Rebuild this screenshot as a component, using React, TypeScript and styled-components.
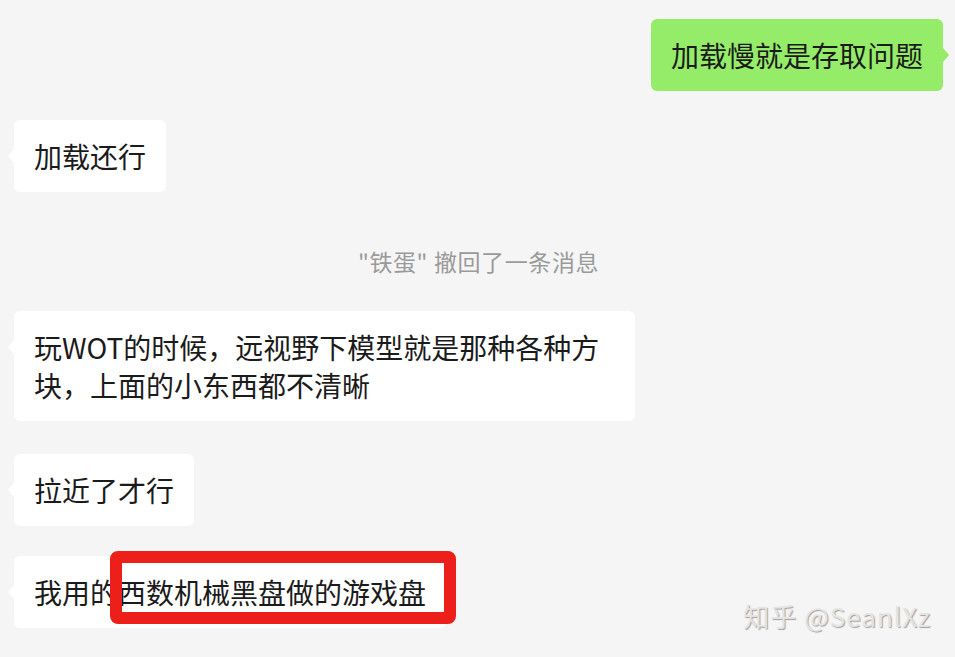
import React from 'react';
import styled, { createGlobalStyle } from 'styled-components';

const GlobalStyle = createGlobalStyle`
  html, body {
    margin: 0;
    padding: 0;
    background: #f5f5f5;
  }
  body {
    font-family: "Noto Sans CJK SC", "Noto Sans", sans-serif;
    color: #1b1b1b;
  }
`;

const Chat = styled.div`
  position: relative;
  width: 955px;
  height: 657px;
  overflow: hidden;
  padding: 19px 12px 0 14px;
  box-sizing: border-box;
  display: flex;
  flex-direction: column;
`;

const Row = styled.div<{ $mine?: boolean; $gap: number }>`
  position: relative;
  display: flex;
  justify-content: ${(p) => (p.$mine ? 'flex-end' : 'flex-start')};
  margin-top: ${(p) => p.$gap}px;
`;

const Bubble = styled.div<{ $mine?: boolean }>`
  position: relative;
  max-width: 581px;
  padding: 17px 20px;
  border-radius: 6px;
  font-size: 28px;
  line-height: 38px;
  background: ${(p) => (p.$mine ? '#95ec69' : '#ffffff')};

  &::before {
    content: '';
    position: absolute;
    top: 29px;
    ${(p) => (p.$mine ? 'right: -6px;' : 'left: -6px;')}
    border-top: 7px solid transparent;
    border-bottom: 7px solid transparent;
    ${(p) =>
      p.$mine
        ? 'border-left: 6px solid #95ec69;'
        : 'border-right: 6px solid #ffffff;'}
  }
`;

const Notice = styled.div`
  margin-top: 47px;
  text-align: center;
  font-size: 23px;
  line-height: 44px;
  letter-spacing: 0.6px;
  color: #9a9a9a;
`;

const Highlight = styled.div`
  position: absolute;
  left: 96px;
  top: -5px;
  width: 346px;
  height: 73px;
  box-sizing: border-box;
  border: 12px solid #ec1f1a;
  border-radius: 8px;
`;

const Watermark = styled.div`
  position: absolute;
  right: 24px;
  top: 598px;
  font-size: 26px;
  line-height: 36px;
  color: #e4e4e4;
  text-shadow: 1px 1px 1px #a0a0a0;
  letter-spacing: 1px;
`;

const App: React.FC = () => {
  return (
    <>
      <GlobalStyle />
      <Chat>
        <Row $mine $gap={0}>
          <Bubble $mine>加载慢就是存取问题</Bubble>
        </Row>
        <Row $gap={29}>
          <Bubble>加载还行</Bubble>
        </Row>
        <Notice>"铁蛋" 撤回了一条消息</Notice>
        <Row $gap={28}>
          <Bubble>玩WOT的时候，远视野下模型就是那种各种方块，上面的小东西都不清晰</Bubble>
        </Row>
        <Row $gap={33}>
          <Bubble>拉近了才行</Bubble>
        </Row>
        <Row $gap={30}>
          <Bubble>我用的西数机械黑盘做的游戏盘</Bubble>
          <Highlight />
        </Row>
        <Watermark>知乎 @SeanlXz</Watermark>
      </Chat>
    </>
  );
};

export default App;
